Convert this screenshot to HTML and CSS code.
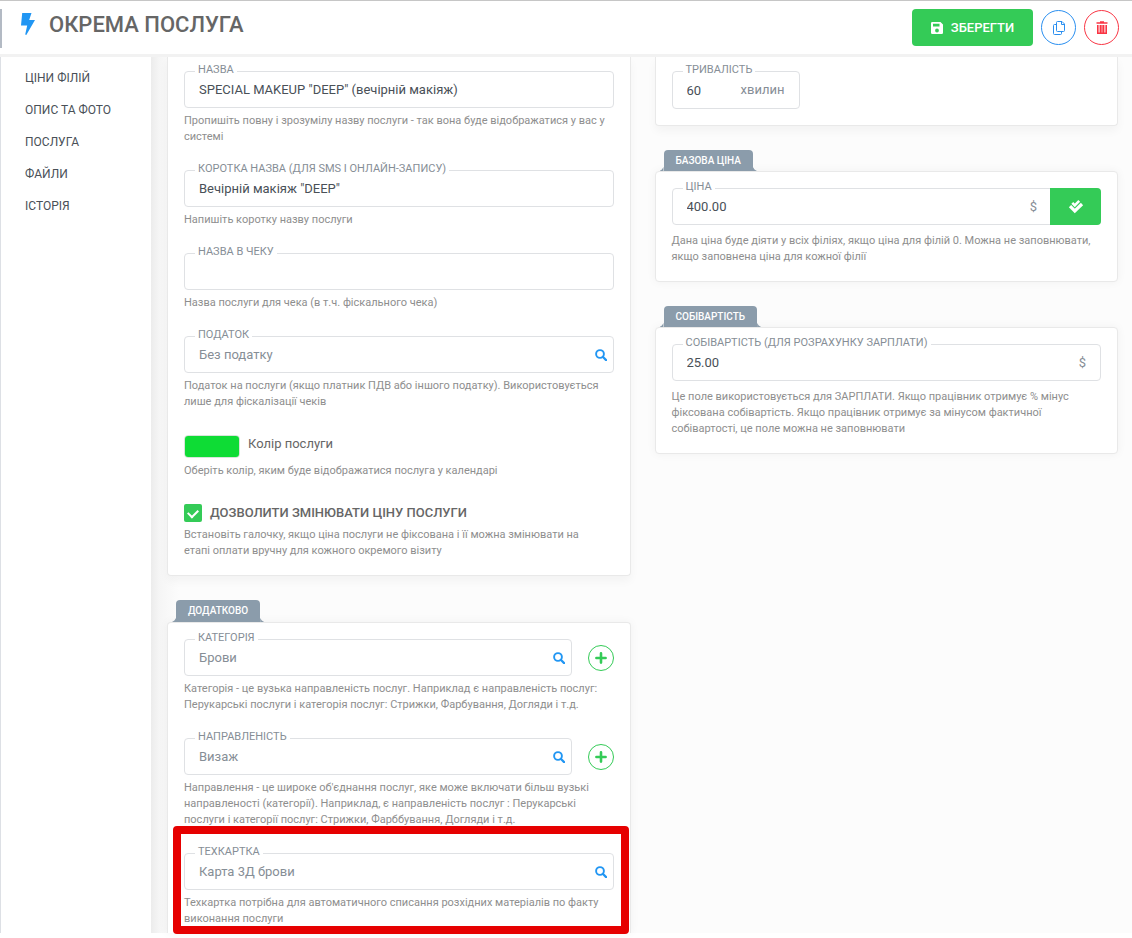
FILE: index.html
```html
<!DOCTYPE html>
<html lang="uk">
<head>
<meta charset="utf-8">
<meta name="viewport" content="width=device-width, initial-scale=1">
<title>Окрема послуга</title>
<link rel="stylesheet" href="styles.css">
</head>
<body>
<svg class="sprite" aria-hidden="true">
  <symbol id="search" viewBox="0 0 12 12"><circle cx="5" cy="5" r="3.9" fill="none" stroke="currentColor" stroke-width="1.9"/><path d="M7.8 7.8 11.1 11.1" stroke="currentColor" stroke-width="2.2" stroke-linecap="round"/></symbol>
  <symbol id="plus" viewBox="0 0 12 12"><path d="M6 1.4v9.2M1.4 6h9.2" stroke="currentColor" stroke-width="2.6" stroke-linecap="round"/></symbol>
</svg>
<header class="topbar">
  <svg class="bolt" viewBox="0 0 14 22" aria-hidden="true"><path d="M1.2 0H10.500L8.200 7H14L5.300 22 4.200 21.500 6.200 12.500H0Z" fill="#2196f3"/></svg>
  <h1 class="title">ОКРЕМА ПОСЛУГА</h1>
  <div class="actions">
    <button class="save" type="button">
      <svg width="12" height="12" viewBox="0 0 12 12" aria-hidden="true"><path fill="#fff" fill-rule="evenodd" d="M1.300 0H9.500L12 2.500V10.700A1.300 1.300 0 0 1 10.700 12H1.300A1.300 1.300 0 0 1 0 10.700V1.300A1.300 1.300 0 0 1 1.300 0ZM2 1.800V4.600H8.500V1.800ZM6 6.600A1.900 1.900 0 1 0 6 10.400 1.900 1.900 0 0 0 6 6.600Z"/></svg>
      <span>ЗБЕРЕГТИ</span>
    </button>
    <button class="round copy" type="button" aria-label="Копіювати">
      <svg width="12" height="14" viewBox="0 0 12 14" fill="none" stroke="currentColor" aria-hidden="true"><path d="M4.500.5H9L11.500 3V9.500A1 1 0 0 1 10.500 10.500H4.500A1 1 0 0 1 3.500 9.500V1.500A1 1 0 0 1 4.500.5ZM8.500.8V3.500H11.200M3.500 3.500H1.500A1 1 0 0 0 .5 4.500V12.500A1 1 0 0 0 1.500 13.500H7.500A1 1 0 0 0 8.500 12.500V10.500"/></svg>
    </button>
    <button class="round remove" type="button" aria-label="Видалити">
      <svg width="12" height="14" viewBox="0 0 12 14" fill="none" stroke="currentColor" aria-hidden="true"><path stroke-width="1.600" d="M.5 2H11.500M4 1H8M1.800 4V12.200H10.200V4"/><path stroke-width="1.400" d="M4.300 4V12M6 4V12M7.700 4V12"/></svg>
    </button>
  </div>
</header>
<div class="layout">
  <nav class="sidebar">
    <a href="#prices">ЦІНИ ФІЛІЙ</a>
    <a href="#about">ОПИС ТА ФОТО</a>
    <a href="#service">ПОСЛУГА</a>
    <a href="#files">ФАЙЛИ</a>
    <a href="#history">ІСТОРІЯ</a>
  </nav>
  <main class="content">
    <div class="column">
      <section class="card card-first">
        <div class="field">
          <div class="box"><label for="name">НАЗВА</label><input id="name" type="text" value='SPECIAL MAKEUP "DEEP" (вечірній макіяж)'></div>
          <p class="hint">Пропишіть повну і зрозумілу назву послуги - так вона буде відображатися у вас у системі</p>
        </div>
        <div class="field">
          <div class="box"><label for="short">КОРОТКА НАЗВА (ДЛЯ SMS І ОНЛАЙН-ЗАПИСУ)</label><input id="short" type="text" value='Вечірній макіяж "DEEP"'></div>
          <p class="hint">Напишіть коротку назву послуги</p>
        </div>
        <div class="field">
          <div class="box"><label for="receipt">НАЗВА В ЧЕКУ</label><input id="receipt" type="text" value=""></div>
          <p class="hint">Назва послуги для чека (в т.ч. фіскального чека)</p>
        </div>
        <div class="field">
          <div class="box lookup"><label for="tax">ПОДАТОК</label><input id="tax" type="text" value="Без податку"><svg class="search"><use href="#search"/></svg></div>
          <p class="hint">Податок на послуги (якщо платник ПДВ або іншого податку). Використовується лише для фіскалізації чеків</p>
        </div>
        <div class="field">
          <div class="color-row"><input id="color" class="swatch" type="color" value="#0edc35"><label for="color">Колір послуги</label></div>
          <p class="hint">Оберіть колір, яким буде відображатися послуга у календарі</p>
        </div>
        <div class="field">
          <div class="check-row"><input id="allow" type="checkbox" checked><label for="allow">ДОЗВОЛИТИ ЗМІНЮВАТИ ЦІНУ ПОСЛУГИ</label></div>
          <p class="hint">Встановіть галочку, якщо ціна послуги не фіксована і її можна змінювати на<br>етапі оплати вручну для кожного окремого візиту</p>
        </div>
      </section>
      <h2 class="tab">ДОДАТКОВО</h2>
      <section class="card card-last">
        <div class="field">
          <div class="with-add">
            <div class="box lookup"><label for="category">КАТЕГОРІЯ</label><input id="category" type="text" value="Брови"><svg class="search"><use href="#search"/></svg></div>
            <button class="add" type="button" aria-label="Додати категорію"><svg width="12" height="12"><use href="#plus"/></svg></button>
          </div>
          <p class="hint">Категорія - це вузька направленість послуг. Наприклад є направленість послуг: Перукарські послуги і категорія послуг: Стрижки, Фарбування, Догляди і т.д.</p>
        </div>
        <div class="field">
          <div class="with-add">
            <div class="box lookup"><label for="direction">НАПРАВЛЕНІСТЬ</label><input id="direction" type="text" value="Визаж"><svg class="search"><use href="#search"/></svg></div>
            <button class="add" type="button" aria-label="Додати направленість"><svg width="12" height="12"><use href="#plus"/></svg></button>
          </div>
          <p class="hint">Направлення - це широке об'єднання послуг, яке може включати більш вузькі направленості (категорії). Наприклад, є направленість послуг : Перукарські послуги і категорії послуг: Стрижки, Фарббування, Догляди і т.д.</p>
        </div>
        <div class="field highlighted">
          <div class="box lookup"><label for="techcard">ТЕХКАРТКА</label><input id="techcard" type="text" value="Карта 3Д брови"><svg class="search"><use href="#search"/></svg></div>
          <p class="hint">Техкартка потрібна для автоматичного списання розхідних матеріалів по факту виконання послуги</p>
        </div>
      </section>
    </div>
    <div class="column side">
      <section class="card card-first">
        <div class="field">
          <div class="box duration"><label for="duration">ТРИВАЛІСТЬ</label><input id="duration" type="text" value="60"><span class="unit">хвилин</span></div>
        </div>
      </section>
      <h2 class="tab">БАЗОВА ЦІНА</h2>
      <section class="card">
        <div class="field">
          <div class="box price"><label for="price">ЦІНА</label><input id="price" type="text" value="400.00"><span class="unit">$</span>
            <button class="apply" type="button" aria-label="Застосувати"><svg width="16" height="16" viewBox="0 0 16 16" fill="none" stroke="#fff" aria-hidden="true"><path stroke-width="2.6" d="M4.300 3.800 6.800 6.300 11.200 1.900"/><path stroke-width="3.2" d="M2 7.200 6.800 12 14 5"/></svg></button>
          </div>
          <p class="hint">Дана ціна буде діяти у всіх філіях, якщо ціна для філій 0. Можна не заповнювати, якщо заповнена ціна для кожної філії</p>
        </div>
      </section>
      <h2 class="tab">СОБІВАРТІСТЬ</h2>
      <section class="card">
        <div class="field">
          <div class="box"><label for="cost">СОБІВАРТІСТЬ (ДЛЯ РОЗРАХУНКУ ЗАРПЛАТИ)</label><input id="cost" type="text" value="25.00"><span class="unit">$</span></div>
          <p class="hint">Це поле використовується для ЗАРПЛАТИ. Якщо працівник отримує % мінус фіксована собівартість. Якщо працівник отримує за мінусом фактичної собівартості, це поле можна не заповнювати</p>
        </div>
      </section>
    </div>
  </main>
</div>
</body>
</html>
```
FILE: styles.css
```css
* { box-sizing: border-box; }

body {
  margin: 0;
  min-height: 100vh;
  padding-bottom: 5px;
  display: flex;
  flex-direction: column;
  background: #fff;
  color: #495057;
  font: 13px/16px Roboto, "Noto Sans", sans-serif;
}

button, input { font: inherit; }
.sprite { position: absolute; width: 0; height: 0; }

.topbar {
  position: relative;
  display: flex;
  align-items: center;
  height: 57px;
  padding: 0 13px 0 21px;
  border-top: 1px solid #c6c6c6;
  border-bottom: 3px solid #f2f2f2;
}

.topbar::before {
  content: "";
  position: absolute;
  left: 0;
  top: 8px;
  width: 2px;
  height: 39px;
  background: #b3bac4;
}

.bolt { width: 14px; height: 22px; margin-bottom: 7px; }

.title {
  margin: 0 0 6px 14px;
  color: #666;
  font-size: 22px;
  line-height: 28px;
  font-weight: 500;
}

.actions { display: flex; align-items: center; gap: 8px; margin-left: auto; }

.save {
  display: flex;
  align-items: center;
  justify-content: center;
  gap: 8px;
  width: 121px;
  height: 37px;
  padding: 0;
  border: 0;
  border-radius: 4px;
  background: #34cb57;
  color: #fff;
  font-weight: 500;
}

.round {
  display: grid;
  place-items: center;
  width: 35px;
  height: 35px;
  padding: 0;
  border: 1px solid currentColor;
  border-radius: 50%;
  background: #fff;
}

.copy { color: #2a8ff0; }
.remove { color: #f93544; }

.layout { flex: 1; display: flex; }

.sidebar {
  flex: none;
  display: flex;
  flex-direction: column;
  width: 151px;
  padding: 5px 0 0 24px;
  border-left: 1px solid #dde0e5;
}

.sidebar a { color: #495057; font-size: 12px; line-height: 32px; text-decoration: none; }

.content {
  flex: 1;
  display: grid;
  grid-template-columns: 1fr 1fr;
  gap: 24px;
  padding: 0 14px 0 16px;
  background: linear-gradient(90deg, #ececec, #f5f5f5 8px, #f8f8f8 16px, #fcfcfc 28px);
}

.column { display: flex; flex-direction: column; min-width: 0; }

.card {
  display: flex;
  flex-direction: column;
  gap: 25px;
  padding: 16px;
  border: 1px solid #e9e9e9;
  border-radius: 4px;
  background: #fff;
  box-shadow: 0 0 10px rgba(0, 0, 0, .05);
}

.card-first { padding-top: 14px; border-top: 0; border-radius: 0 0 4px 4px; box-shadow: 0 5px 10px rgba(0, 0, 0, .04); }
.card-last { flex: 1; padding-bottom: 0; border-bottom: 0; border-radius: 4px 4px 0 0; }

.tab {
  position: relative;
  align-self: flex-start;
  margin: 24px 0 0 9px;
  padding: 0 12px;
  border-radius: 4px 4px 0 0;
  background: #8b9cab;
  color: #fff;
  font-size: 10px;
  line-height: 22px;
  font-weight: 500;
}

.side .tab { line-height: 21px; }

.tab::before, .tab::after {
  content: "";
  position: absolute;
  bottom: 0;
  width: 4px;
  height: 4px;
  background: #8b9cab;
}

.tab::before { right: 100%; clip-path: polygon(100% 0, 100% 100%, 0 100%, 60% 60%); }
.tab::after { left: 100%; clip-path: polygon(0 0, 0 100%, 100% 100%, 40% 60%); }

.box {
  position: relative;
  display: flex;
  align-items: center;
  height: 37px;
  border: 1px solid #dfe1e4;
  border-radius: 4px;
}

.duration { width: 128px; height: 38px; }

.box label {
  position: absolute;
  left: 10px;
  top: -10px;
  padding: 0 3px;
  background: #fff;
  color: #868e96;
  font-size: 11px;
  line-height: 16px;
}

.box input {
  flex: 1;
  min-width: 0;
  height: 100%;
  padding: 0 14px;
  border: 0;
  outline: 0;
  background: none;
  color: #495057;
}

.lookup input { color: #868e96; }
.search { flex: none; width: 12px; height: 12px; margin-right: 6px; color: #2196f3; }
.unit { margin-right: 14px; color: #868e96; }

.hint { margin: 5px 0 0; color: #8e8e8e; font-size: 11px; line-height: 16px; }
.side .hint { margin-top: 8px; }

.color-row { display: flex; gap: 8px; height: 23px; line-height: 18px; color: #666; }

.swatch {
  width: 56px;
  height: 23px;
  padding: 0;
  border: 1px solid #d8e4da;
  border-radius: 4px;
  background: #0edc35;
  appearance: none;
  overflow: hidden;
}

.swatch::-webkit-color-swatch-wrapper { padding: 0; }
.swatch::-webkit-color-swatch { border: 0; }

.check-row { display: flex; align-items: center; gap: 8px; height: 18px; color: #666; font-weight: 500; }

.check-row input {
  width: 18px;
  height: 18px;
  margin: 0;
  display: grid;
  place-items: center;
  appearance: none;
  border-radius: 2px;
  background: #34cb57;
}

.check-row input:checked::before {
  content: "";
  width: 8px;
  height: 5px;
  margin-bottom: 2px;
  border: solid #fff;
  border-width: 0 0 2px 2px;
  transform: rotate(-45deg);
}

.with-add { display: flex; align-items: center; gap: 16px; }
.with-add .box { flex: 1; }

.add {
  display: grid;
  place-items: center;
  width: 26px;
  height: 26px;
  padding: 0;
  border: 1px solid #34cb57;
  border-radius: 50%;
  background: #fff;
  color: #34cb57;
}

.apply {
  display: grid;
  place-items: center;
  align-self: stretch;
  width: 51px;
  margin: -1px;
  padding: 0;
  border: 0;
  border-radius: 0 4px 4px 0;
  background: #34cb57;
}

.highlighted { position: relative; }

.highlighted::after {
  content: "";
  position: absolute;
  inset: -27px -15px -7px -11px;
  border: 8px solid #e60000;
  border-radius: 4px;
  pointer-events: none;
}
```
